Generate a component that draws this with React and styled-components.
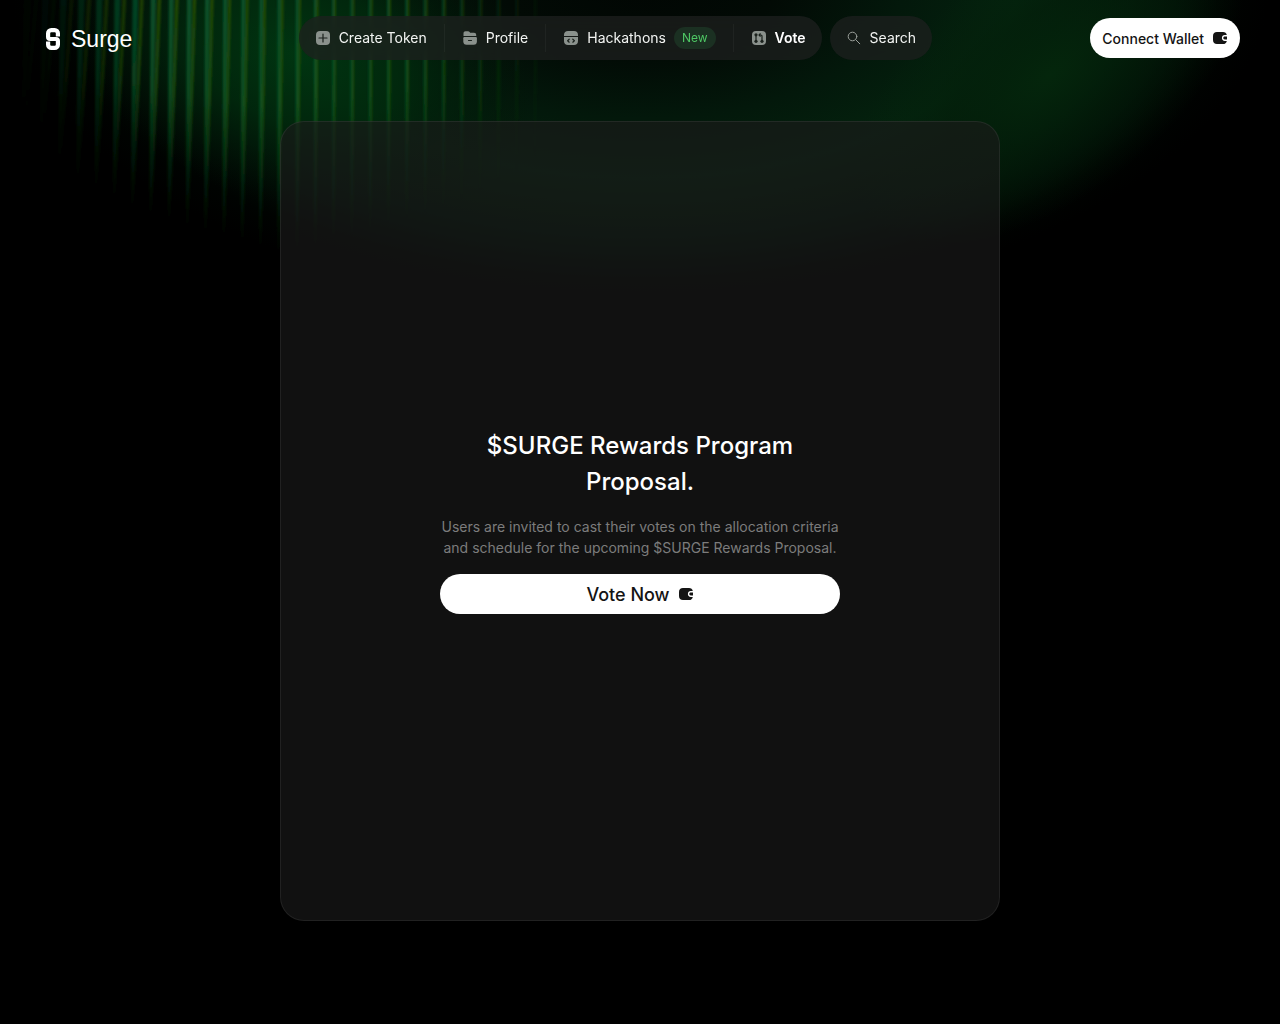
import React from "react";
import styled, { createGlobalStyle, css } from "styled-components";

const pageBackground = "#000";
const panelBackground = "rgba(27, 27, 27, 0.64)";
const menuBackground = "rgba(29, 31, 30, 0.76)";
const lineColor = "rgba(255, 255, 255, 0.07)";
const textColor = "#f2f4f2";
const mutedColor = "#7c7c7c";
const iconColor = "#8a918c";
const iconCut = "#1a211c";
const darkColor = "#141414";
const accentColor = "#4ec764";
const textFont = '"Inter", "Liberation Sans", sans-serif';
const logoFont = '"Liberation Sans", Arial, sans-serif';

const GlobalStyle = createGlobalStyle`
    *, *::before, *::after {
        box-sizing: border-box;
    }
    body {
        margin: 0;
        background: ${pageBackground};
        color: ${textColor};
        font-family: ${textFont};
        font-size: 14px;
        line-height: 20px;
    }
    h1, p {
        margin: 0;
    }
`;

const PageStyled = styled.div`
    position: relative;
    min-height: 100vh;
    padding-bottom: 40px;
    overflow: hidden;
`;

const BackdropStyled = styled.svg`
    position: absolute;
    top: 0;
    left: 0;
    width: 100%;
    height: 320px;
`;

const HeaderStyled = styled.header`
    position: relative;
    display: flex;
    justify-content: space-between;
    align-items: center;
    padding: 16px 40px;
`;

const LogoStyled = styled.a`
    display: flex;
    align-items: center;
    gap: 11px;
    padding: 2px 8px 0 6px;
    color: #fff;
    font-family: ${logoFont};
    font-size: 23px;
    line-height: 28px;
    text-decoration: none;
`;

const MenuStyled = styled.div`
    display: flex;
    align-items: center;
    gap: 8px;
`;

const pill = css`
    height: 44px;
    border-radius: 22px;
    background: ${menuBackground};
    backdrop-filter: blur(10px);
`;

const NavStyled = styled.nav`
    ${pill}
    display: flex;
    align-items: center;
    gap: 1px;
`;

const NavItemStyled = styled.a`
    display: flex;
    align-items: center;
    gap: 8px;
    padding: 0 16px;
    color: ${(props) => (props.$active ? "#fff" : textColor)};
    font-weight: ${(props) => (props.$active ? 600 : 400)};
    text-decoration: none;
    white-space: nowrap;
`;

const DividerStyled = styled.span`
    width: 1px;
    height: 28px;
    background: rgba(255, 255, 255, 0.04);
`;

const BadgeStyled = styled.span`
    padding: 1px 8px;
    border-radius: 11px;
    background: #1b3022;
    color: ${accentColor};
    font-size: 12px;
`;

const SearchStyled = styled.button`
    ${pill}
    display: flex;
    align-items: center;
    gap: 8px;
    padding: 0 16px;
    border: 0;
    color: ${textColor};
    font: inherit;
    cursor: pointer;
`;

const ButtonStyled = styled.button`
    display: flex;
    justify-content: center;
    align-items: center;
    gap: 8px;
    width: ${(props) => (props.$large ? "100%" : "auto")};
    height: 40px;
    padding: 0 12px;
    border: 0;
    border-radius: 20px;
    background: #fff;
    color: ${darkColor};
    font-family: inherit;
    font-size: ${(props) => (props.$large ? "18px" : "14px")};
    font-weight: 500;
    white-space: nowrap;
    cursor: pointer;
`;

const CardStyled = styled.main`
    position: relative;
    display: flex;
    justify-content: center;
    align-items: center;
    max-width: 720px;
    min-height: 800px;
    margin: 45px auto 0;
    padding: 24px;
    border: 1px solid ${lineColor};
    border-radius: 24px;
    background: ${panelBackground};
`;

const ProposalStyled = styled.section`
    display: flex;
    flex-direction: column;
    gap: 16px;
    width: 400px;
    text-align: center;
    h1 {
        color: #fff;
        font-size: 24px;
        font-weight: 500;
        line-height: 36px;
    }
    p {
        color: ${mutedColor};
        line-height: 21px;
    }
`;

const PlusIcon = () => (
    <svg width="16" height="16" viewBox="0 0 16 16" aria-hidden="true">
        <rect x="1" y="1" width="14" height="14" rx="4" fill={iconColor} />
        <path d="M8 4v8M4 8h8" stroke={iconCut} strokeWidth="1.2" strokeLinecap="round" />
    </svg>
);

const FolderIcon = () => (
    <svg width="16" height="16" viewBox="0 0 16 16" aria-hidden="true">
        <path d="M1.500 6V3.200C1.500 2 2.300 1.200 3.500 1.200H6c.7 0 1.200.3 1.600.9l.5.7H12c1.300 0 2.200.9 2.200 2.200V6z" fill={iconColor} />
        <path d="M1.300 8.300c0-.8.5-1.300 1.300-1.300h11c.8 0 1.300.5 1.300 1.300v3.200c0 2-1.200 3.300-3.200 3.300H4.500c-2 0-3.200-1.300-3.200-3.300z" fill={iconColor} />
        <path d="M6.500 10.500h3" stroke={iconCut} strokeWidth="1.1" strokeLinecap="round" />
    </svg>
);

const CodeIcon = () => (
    <svg width="16" height="16" viewBox="0 0 16 16" aria-hidden="true">
        <path d="M1 6V5c0-2.500 1.500-4 4-4h6c2.500 0 4 1.500 4 4v1z" fill={iconColor} />
        <path d="M1 7h14v4c0 2.500-1.500 4-4 4H5c-2.500 0-4-1.500-4-4z" fill={iconColor} />
        <path d="M6.200 9.200L4.600 10.700l1.600 1.500M9.800 9.200l1.600 1.500-1.600 1.500" stroke={iconCut} strokeWidth="1.2" fill="none" strokeLinecap="round" strokeLinejoin="round" />
    </svg>
);

const VoteIcon = () => (
    <svg width="16" height="16" viewBox="0 0 16 16" aria-hidden="true">
        <rect x="1" y="1" width="14" height="14" rx="4" fill={iconColor} />
        <g stroke={iconCut} fill="none" strokeWidth="1.2">
            <path d="M5 5v6M11 11V6.200c0-.7-.4-1.200-1.200-1.200H8.400M9.500 3.400L8 5l1.500 1.600" />
        </g>
        <g fill={iconCut}>
            <circle cx="5" cy="4.8" r="1.6" />
            <circle cx="5" cy="11.3" r="1.6" />
            <circle cx="11" cy="11.3" r="1.6" />
        </g>
    </svg>
);

const SearchIcon = () => (
    <svg width="16" height="16" viewBox="0 0 16 16" aria-hidden="true">
        <g stroke="#9aa09b" fill="none" strokeLinecap="round">
            <circle cx="6.5" cy="6.500" r="4.3" />
            <path d="M9.800 9.800l4 4" />
        </g>
    </svg>
);

const WalletIcon = () => (
    <svg width="16" height="16" viewBox="0 0 16 16" aria-hidden="true">
        <path d="M5 2h6c2 0 3.500 1.100 3.800 3.100H12.700c-1.600 0-2.800 1.300-2.800 2.900s1.200 2.900 2.800 2.900h2.100C14.500 12.900 13 14 11 14H5c-2.500 0-4-1.500-4-4V6c0-2.500 1.500-4 4-4z" fill={darkColor} />
        <path d="M15 6.600v2.800h-2.200c-.9 0-1.500-.6-1.500-1.400s.6-1.400 1.500-1.400z" fill={darkColor} />
    </svg>
);

const LogoMark = () => (
    <svg width="14" height="22" viewBox="0 0 14 22" aria-hidden="true">
        <path
            d="M11.900 8.500V5.300a3.200 3.200 0 0 0-3.200-3.200H5.300a3.200 3.200 0 0 0-3.200 3.200v3.700c0 1.300.7 2 2 2h5.800c1.300 0 2 .7 2 2v3.700a3.200 3.200 0 0 1-3.200 3.200H5.300a3.200 3.200 0 0 1-3.200-3.200v-3.200"
            fill="none"
            stroke="#fff"
            strokeWidth="4.2"
        />
    </svg>
);

const stripeGap = 18.3;

// each ray is a thin wedge: wider and leaning right at the top, fading out below
const stripes = Array.from({ length: 29 }, (_, i) => {
    const x = 21 + i * stripeGap;
    const lean = Math.max(0, (330 - x) / 330);
    const reach = x < 285 ? 110 + Math.sqrt(x / 285) * 150 : 260 - (x - 285) * 0.3;
    let strength = 0.78;
    if (x < 150) strength = Math.max(0.06, (x - 25) / 165);
    if (x > 330) strength = 0.7;
    if (x > 410) strength = Math.max(0.1, 0.7 - (x - 410) / 190);
    return { x, lean, reach, strength };
});

const wedge = (top, bottom, width, reach) =>
    `${top},-4 ${top + width},-4 ${bottom + 2},${reach} ${bottom},${reach}`;

const Backdrop = () => (
    <BackdropStyled viewBox="0 0 1280 320" preserveAspectRatio="none" aria-hidden="true">
        <defs>
            <radialGradient id="arc" gradientUnits="userSpaceOnUse" cx="0" cy="0" r="1" gradientTransform="translate(640 -20) scale(630 330)">
                <stop offset="0" stopColor="#010603" />
                <stop offset="0.22" stopColor="#020a05" />
                <stop offset="0.42" stopColor="#03180b" />
                <stop offset="0.6" stopColor="#04220e" />
                <stop offset="0.78" stopColor="#021409" />
                <stop offset="0.92" stopColor="#000301" />
                <stop offset="1" stopColor="#000" />
            </radialGradient>
            <radialGradient id="glow" gradientUnits="userSpaceOnUse" cx="0" cy="0" r="1" gradientTransform="translate(300 55) rotate(14) scale(240 150)">
                <stop offset="0" stopColor="#003611" stopOpacity="0.95" />
                <stop offset="0.45" stopColor="#002b0d" stopOpacity="0.75" />
                <stop offset="1" stopColor="#001205" stopOpacity="0" />
            </radialGradient>
            <radialGradient id="side" gradientUnits="userSpaceOnUse" cx="0" cy="0" r="1" gradientTransform="translate(1050 75) rotate(-38) scale(230 120)">
                <stop offset="0" stopColor="#04260c" />
                <stop offset="0.5" stopColor="#03200a" stopOpacity="0.6" />
                <stop offset="1" stopColor="#04260c" stopOpacity="0" />
            </radialGradient>
            <linearGradient id="teal" x1="0" y1="0" x2="0" y2="1">
                <stop offset="0" stopColor="#0a5c34" />
                <stop offset="0.4" stopColor="#0b5a2a" />
                <stop offset="0.6" stopColor="#0c581f" stopOpacity="0.65" />
                <stop offset="1" stopColor="#06401a" stopOpacity="0" />
            </linearGradient>
            <linearGradient id="olive" x1="0" y1="0" x2="0" y2="1">
                <stop offset="0" stopColor="#2c5206" />
                <stop offset="0.4" stopColor="#22560e" />
                <stop offset="0.7" stopColor="#14501a" stopOpacity="0.4" />
                <stop offset="1" stopColor="#0a4018" stopOpacity="0" />
            </linearGradient>
            <filter id="soften" x="-5%" y="-5%" width="110%" height="110%">
                <feGaussianBlur stdDeviation="1.1 2" />
            </filter>
        </defs>
        <rect width="1280" height="320" fill="url(#arc)" />
        <rect width="1280" height="320" fill="url(#side)" />
        <rect width="1280" height="320" fill="url(#glow)" />
        <g filter="url(#soften)">
            {stripes.map(({ x, lean, reach, strength }) => (
                <g key={x} opacity={strength}>
                    <polygon points={wedge(x + 3 * lean, x, 2 + 6 * lean, reach)} fill="url(#teal)" />
                    <polygon points={wedge(x + 2 + 12 * lean, x + 1, 2 + 3 * lean, reach)} fill="url(#olive)" />
                </g>
            ))}
        </g>
    </BackdropStyled>
);

const App = () => {
    return (
        <PageStyled>
            <GlobalStyle />
            <Backdrop />
            <HeaderStyled>
                <LogoStyled href="#home">
                    <LogoMark />
                    Surge
                </LogoStyled>
                <MenuStyled>
                    <NavStyled>
                        <NavItemStyled href="#create"><PlusIcon />Create Token</NavItemStyled>
                        <DividerStyled />
                        <NavItemStyled href="#profile"><FolderIcon />Profile</NavItemStyled>
                        <DividerStyled />
                        <NavItemStyled href="#hackathons">
                            <CodeIcon />
                            Hackathons
                            <BadgeStyled>New</BadgeStyled>
                        </NavItemStyled>
                        <DividerStyled />
                        <NavItemStyled href="#vote" $active><VoteIcon />Vote</NavItemStyled>
                    </NavStyled>
                    <SearchStyled type="button"><SearchIcon />Search</SearchStyled>
                </MenuStyled>
                <ButtonStyled type="button">Connect Wallet<WalletIcon /></ButtonStyled>
            </HeaderStyled>
            <CardStyled>
                <ProposalStyled>
                    <h1>$SURGE Rewards Program Proposal.</h1>
                    <p>
                        Users are invited to cast their votes on the allocation criteria
                        and schedule for the upcoming $SURGE Rewards Proposal.
                    </p>
                    <ButtonStyled type="button" $large>Vote Now<WalletIcon /></ButtonStyled>
                </ProposalStyled>
            </CardStyled>
        </PageStyled>
    );
};

export default App;
